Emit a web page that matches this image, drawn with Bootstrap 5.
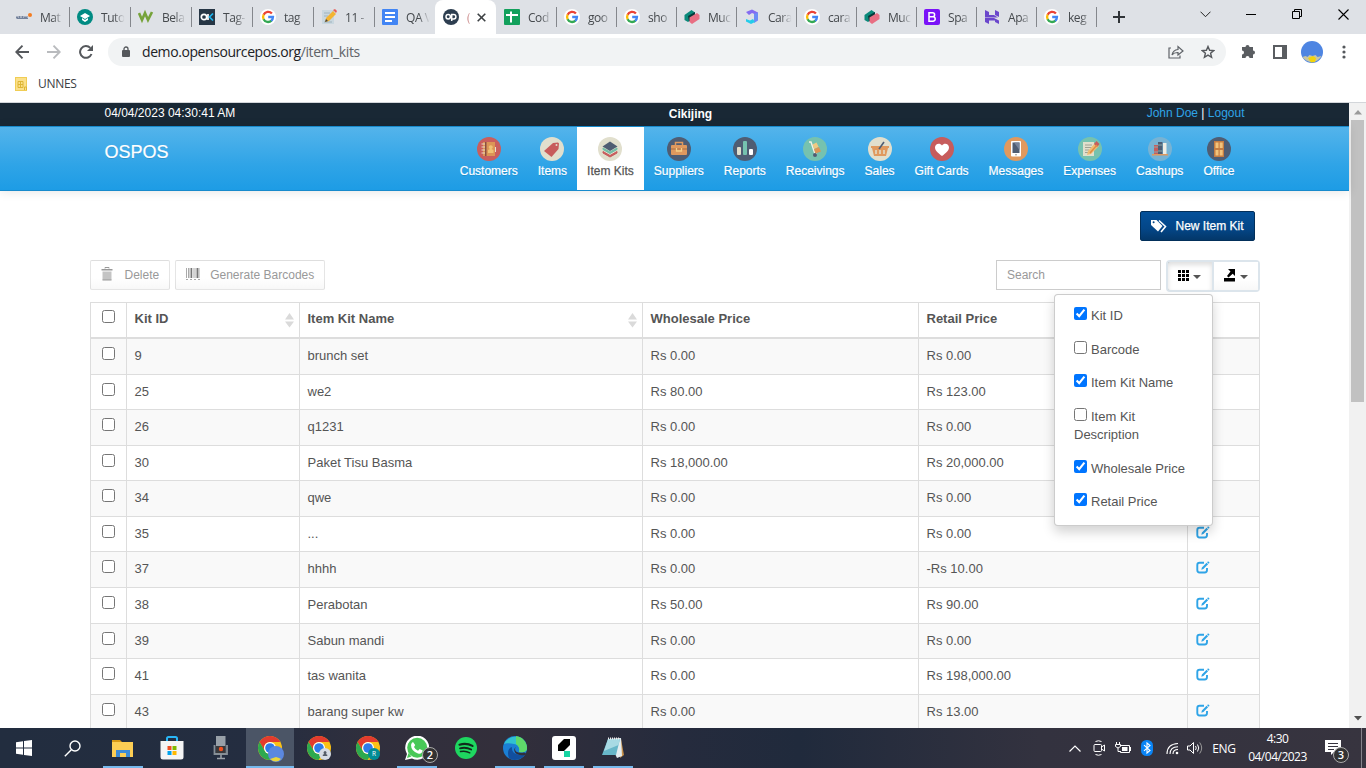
<!DOCTYPE html>
<html lang="en">
<head>
<meta charset="utf-8">
<meta name="viewport" content="width=device-width, initial-scale=1">
<title>Item Kits | OSPOS</title>
<link href="https://cdn.jsdelivr.net/npm/bootstrap@5.3.0/dist/css/bootstrap.min.css" rel="stylesheet">
<style>
:root{--ui:"Open Sans","Noto Sans",sans-serif;--app:"Liberation Sans",Arial,sans-serif}
body{height:768px;font-family:var(--app);font-size:13px;line-height:1.428571;color:#555;overflow:hidden}
svg{display:block;flex:none}
/* browser frame */
.tabs{height:34px;background:#dee1e6;padding-left:8px;font:12px var(--ui);color:#45494d}
.btab{width:61px;padding-left:8px;gap:8px;position:relative;height:34px}
.btab.short{width:60px}
.btab.sep::before{content:"";position:absolute;left:0;top:7px;width:1px;height:20px;background:#84878c}
.btab span{width:25px;flex:none;white-space:nowrap;letter-spacing:-.45px;-webkit-mask-image:linear-gradient(90deg,#000 50%,transparent 95%)}
.btab.current{background:#fff;border-radius:8px 8px 0 0}
.btab.current span{width:7px;color:#b66;-webkit-mask-image:linear-gradient(90deg,#000,transparent 60%)}
.winbtn{width:46px;height:28px}
.toolbar{height:35px}
.cell{width:32px;flex:none;display:flex;align-items:center;justify-content:center}
.omni{width:1118px;height:28px;border-radius:14px;background:#f1f3f4;font:14px var(--ui);letter-spacing:-.42px;color:#5f6368;padding-right:2px}
.omni b{font-weight:400;color:#202124}
.marks{height:34px;border-bottom:1px solid #d3d6da;font:12px var(--ui);color:#3c4043;padding:0 0 4px 15px;gap:10px}
/* application */
.viewport{height:625px;overflow:hidden}
.page{width:1349px}
.inner{width:1170px;margin-left:90px}
.topline{height:23px;background:#192835;color:#fff;font-size:12px;line-height:20px}
.topline .inner,.appnav .inner{padding:0 15.5px 0 14.5px}
.topline a{color:#2fa4e7;text-decoration:none}
.appnav{height:65px;padding:0;border:1px solid #178acc;border-width:1px 0;background:linear-gradient(#54b4eb,#2fa4e7 60%,#1d9ce5);box-shadow:0 1px 10px rgba(0,0,0,.1);text-shadow:0 1px 0 rgba(0,0,0,.12)}
.brandname{font-size:18px;color:#fff;padding-top:13px;-webkit-text-stroke:.2px}
.mod{padding:10px 10px 0;height:63px;font-size:12px;color:#fff;display:flex;flex-direction:column;align-items:center;line-height:17px;gap:1.5px;text-decoration:none;white-space:nowrap;-webkit-text-stroke:.2px}
.mod.on{background:#fff;color:#555}
.abtn{height:30px;border:1px solid rgba(0,0,0,.1);border-radius:2px;font-size:12px;line-height:18px;padding:5px 10px;display:flex;align-items:center;color:#999;background:linear-gradient(#fff,#fff 60%,#f8f8f8)}
.abtn.main{color:#fff;background:linear-gradient(#04519b,#044687 60%,#033769);border-color:#022f5a;-webkit-text-stroke:.25px #fff}
.find{width:165px;height:30px;border:1px solid #ccc;border-radius:0;font-size:12px;padding:5px 10px;box-shadow:none}
.find::placeholder{color:#999}
.duo{height:32px;width:94px;border:2px solid #dce5ec;border-radius:4px;background:#fff}
.duo>div{width:45px;display:flex;align-items:center;justify-content:center;gap:4px;padding:0 2px 1px 0}
.duo>div:first-child{width:44px;box-shadow:inset 0 3px 5px rgba(0,0,0,.13)}
.duo>div+div{width:46px;padding-right:0;border-left:2px solid #dce5ec;background:linear-gradient(#fff,#fff 60%,#f8f8f8)}
.caret{border:4px solid transparent;border-top-color:#555;border-bottom:0;margin-top:2px}
.kits{width:1170px;table-layout:fixed;border-collapse:collapse;margin:0;color:#555;font-size:13px}
.kits>:not(caption)>*>*{padding:8px 7.5px;border:1px solid #ddd;box-shadow:none;background:#fff;line-height:18.57px;white-space:nowrap;overflow:visible}
.kits>tbody>tr:nth-child(odd)>td{background:#f9f9f9}
.kits>thead>tr>th{border-bottom-width:2px;padding-top:7px;font-weight:700;position:relative}
.kits input,.colmenu input{width:13px;height:13px;margin:0}
.kits td:first-child input,.kits th:first-child input{display:block;margin:0 auto 3px 3.5px}
.kits th:first-child input{margin-bottom:6px}
.kits td svg{margin-top:1px}
.sorter{position:absolute;right:5px;top:10px}
.colmenu{position:absolute;left:1053.5px;top:191px;width:159px;height:232px;background:#fff;border:1px solid rgba(0,0,0,.2);border-radius:4px;box-shadow:0 6px 12px rgba(0,0,0,.175);padding:12px 19.5px 0;z-index:5}
.colmenu label{display:block;margin-bottom:15px;line-height:18.57px}
.colmenu input{vertical-align:-1px;margin-right:4px;position:relative;top:-1px}
.scroller{width:17px;background:#f1f1f1;padding:7px 0;display:flex;flex-direction:column;align-items:center}
.thumb{width:13px;height:282px;background:#c1c1c1;margin-top:5px}
/* taskbar */
.taskbar{height:40px;background:linear-gradient(90deg,#222d3f 0,#242d40 260px,#302f3d 370px,#332f3b 500px,#252b3d 680px,#202a3c 800px,#33323f 1040px,#37343f);color:#fff;font:12px var(--ui);letter-spacing:-.5px}
.app{width:48px;height:40px;margin-right:1px;display:flex;align-items:center;justify-content:center;position:relative;flex:none}
.open::after{content:"";position:absolute;bottom:0;left:4px;width:40px;height:2px;background:#76b9ed}
.app.front{background:#4b5566}.app.front::after{left:0;width:48px}
.cnt{position:absolute;width:16px;height:16px;border-radius:50%;background:#333;border:1px solid #aaa;font:600 11px/14px var(--ui);text-align:center;letter-spacing:0}
.clock{width:78px;text-align:center;line-height:18px}
</style>
</head>
<body class="d-flex flex-column bg-white">
<svg width="0" height="0" class="position-absolute">
<defs>
<symbol id="goog" viewBox="0 0 16 16"><circle cx="8" cy="8" r="8" fill="#fff"/><g fill="none" stroke-width="2.3"><path d="M11.9 4.5A5 5 0 0 0 3.6 5.8" stroke="#ea4335"/><path d="M3.7 5.6a5 5 0 0 0 0 4.8" stroke="#fbbc05"/><path d="M3.6 10.2A5 5 0 0 0 11.5 11.6" stroke="#34a853"/><path d="M8.2 8H13A5 5 0 0 1 11.2 11.8" stroke="#4285f4"/></g></symbol>
<symbol id="hex" viewBox="0 0 16 16"><path d="M.5 6l7-5L11 3.500V8l-7 5-3.500-2z" fill="#0b8a7b"/><path d="M4 7l7-4v5l-6 4.500z" fill="#073b3a"/><path d="M5.500 8.500L13 4l2.500 2v4L8 15l-2.500-2z" fill="#e86f83"/></symbol>
<symbol id="chrome" viewBox="0 0 24 24"><circle cx="12" cy="12" r="12" fill="#fbc116"/><path d="M1.6 6A12 12 0 0 1 22.4 6H12a6 6 0 0 0-5.6 8.2z" fill="#e33b2e"/><path d="M1.6 6A12 12 0 0 0 11.5 24L17 15.3A6 6 0 0 1 6.6 14.6z" fill="#2da94f"/><circle cx="12" cy="12" r="6" fill="#fff"/><circle cx="12" cy="12" r="4.8" fill="#2f7bea"/></symbol>
<symbol id="edit" viewBox="0 0 14 13"><path d="M8 1.800H3.600Q1.300 1.800 1.300 4v5Q1.300 11.500 3.600 11.500H8.600Q11 11.500 11 9V7" fill="none" stroke="#2fa4e7" stroke-width="1.900"/><path d="M5.300 8.800l.6-2.300L10.600 1.800l1.500 1.500-4.700 4.800zM11.100 1.200l1-.9 1.500 1.400-1 1z" fill="#2fa4e7"/></symbol>
</defs></svg>

<div class="tabs d-flex align-items-center">
 <div class="btab d-flex align-items-center"><svg width="16" height="16"><path d="M0 8h2v1H0zm3-1h1v2h2V7h1v2h1V8h3v1h1v1H1V9h2z" fill="#73829c"/><path d="M0 7h12v3H0z" fill="#73829c" opacity=".5"/><circle cx="14" cy="6" r="2" fill="#f47b20"/></svg><span>Mat</span></div>
 <div class="btab sep d-flex align-items-center"><svg width="16" height="16"><circle cx="8" cy="8" r="8" fill="#008b83"/><path d="M3 7l5-3 5 3-5 3zM5 9v2l3 2 3-2V9l-3 2z" fill="#fff"/></svg><span>Tuto</span></div>
 <div class="btab sep d-flex align-items-center"><svg width="16" height="16" fill="none" stroke="#76a33a" stroke-width="2.600"><path d="M1 4l3 7 3-7 3 7 4-8"/></svg><span>Bela</span></div>
 <div class="btab sep d-flex align-items-center"><svg width="16" height="16"><path fill="#263645" d="M0 0h16v16H0z"/><g fill="none" stroke-width="1.700"><circle cx="5" cy="8" r="2.700" stroke="#fff"/><path d="M9 5v6" stroke="#fff"/><path d="M14 4.500L10.500 8l3.500 3.500" stroke="#1cb5ef"/></g></svg><span>Tag-</span></div>
 <div class="btab sep d-flex align-items-center"><svg width="16" height="16"><use href="#goog"/></svg><span>tag</span></div>
 <div class="btab sep d-flex align-items-center"><svg width="16" height="16"><path fill="#c9d7df" d="M1 1h12v14H1z"/><path d="M3 4h6M3 7h4M3 13h8" stroke="#9fb2bd"/><path d="M4 13l1-4 7-7 3 3-7 7z" fill="#f3b431"/><path d="M12 1l2-1 2 2-1 2z" fill="#e75d58"/><path d="M4 13l1-3 2 2z" fill="#444"/></svg><span>11 -</span></div>
 <div class="btab sep d-flex align-items-center"><svg width="16" height="16"><rect width="16" height="16" rx="1" fill="#4285f4"/><path d="M3 4h10M3 8h10M3 12h7" stroke="#fff" stroke-width="2"/></svg><span>QA V</span></div>
 <div class="btab current d-flex align-items-center"><svg width="16" height="16"><circle cx="8" cy="8" r="8" fill="#2d3e50"/><g fill="none" stroke="#fff" stroke-width="1.500"><circle cx="5.200" cy="7.700" r="2.200"/><path d="M8.700 12V5.500h2a2.200 2.200 0 0 1 0 4.400H8"/></g></svg><span>(</span><svg width="9" height="9" stroke="#3c4043" stroke-width="1.600" style="margin-left:-5px"><path d="M.7.7l7.600 7.600M8.300.7L.7 8.300"/></svg></div>
 <div class="btab short d-flex align-items-center"><svg width="16" height="16"><rect width="16" height="16" rx="1" fill="#12a05c"/><path d="M2 6h12M7 2.500v11" stroke="#fff" stroke-width="2"/></svg><span>Cod</span></div>
 <div class="btab short sep d-flex align-items-center"><svg width="16" height="16"><use href="#goog"/></svg><span>goo</span></div>
 <div class="btab short sep d-flex align-items-center"><svg width="16" height="16"><use href="#goog"/></svg><span>sho</span></div>
 <div class="btab short sep d-flex align-items-center"><svg width="16" height="16"><use href="#hex"/></svg><span>Muc</span></div>
 <div class="btab short sep d-flex align-items-center"><svg width="16" height="16"><path d="M2 3l6-2.500 6 3v3L8 4 5 6z" fill="#846cf1"/><path d="M10 5l4-1.500v8l-4 2.500z" fill="#6d8df5"/><path d="M2 10l4 1.500 3-1.500 2 3-4 2-5-2.500z" fill="#25ccea"/></svg><span>Cara</span></div>
 <div class="btab short sep d-flex align-items-center"><svg width="16" height="16"><use href="#goog"/></svg><span>cara</span></div>
 <div class="btab short sep d-flex align-items-center"><svg width="16" height="16"><use href="#hex"/></svg><span>Muc</span></div>
 <div class="btab short sep d-flex align-items-center"><svg width="16" height="16"><rect width="16" height="16" rx="2" fill="#7a12f8"/><path d="M5 3.800h3.600a2 2 0 0 1 0 4H5zM5 7.800h4a2.200 2.200 0 0 1 0 4.400H5z" fill="none" stroke="#fff" stroke-width="1.500"/></svg><span>Spa</span></div>
 <div class="btab short sep d-flex align-items-center"><svg width="16" height="16" fill="#6b47cc"><path d="M1 1l4 2v3h5l4 2.500H1zM11 1l4 2v5l-4-2zM1 9h9l5 2.500V15l-4-2v-1.500H5V15l-4-2z"/></svg><span>Apa</span></div>
 <div class="btab short sep d-flex align-items-center"><svg width="16" height="16"><use href="#goog"/></svg><span>keg</span></div>
 <div class="btab sep d-flex align-items-center" style="width:86px;padding-left:17px"><svg width="12" height="12" stroke="#303438" stroke-width="2"><path d="M0 6h12M6 0v12"/></svg></div>
 <div class="d-flex align-self-start">
  <div class="winbtn d-flex align-items-center justify-content-center"><svg width="11" height="7" fill="none" stroke="#222"><path d="M.5.700l5 5 5-5"/></svg></div>
  <div class="winbtn d-flex align-items-center justify-content-center"><svg width="10" height="1"><path fill="#000" d="M0 0h10v1H0z"/></svg></div>
  <div class="winbtn d-flex align-items-center justify-content-center"><svg width="10" height="10" fill="none" stroke="#000"><path d="M.5 2.500h7v7h-7zM2.500 2V.5h7v7H8"/></svg></div>
  <div class="winbtn d-flex align-items-center justify-content-center"><svg width="11" height="11" stroke="#000" stroke-width="1.100"><path d="M.5.5l10 10M10.500.5l-10 10"/></svg></div>
 </div>
</div>
<div class="toolbar d-flex align-items-center" style="padding-left:6px">
 <div class="cell"><svg width="14" height="14" fill="none" stroke="#55585c" stroke-width="1.900"><path d="M14 7H1.500M7.500.7L1.300 7l6.200 6.300"/></svg></div>
 <div class="cell"><svg width="14" height="14" fill="none" stroke="#b9bbbe" stroke-width="1.900"><path d="M0 7h12.500M6.500.7L12.700 7l-6.200 6.300"/></svg></div>
 <div class="cell"><svg width="14" height="14" fill="none" stroke="#55585c" stroke-width="2"><path d="M12.500 9A5.900 5.900 0 1 1 11.300 2.900"/><path d="M14 0v6H8z" fill="#55585c" stroke="none"/></svg></div>
 <div class="omni d-flex align-items-center" style="margin:0 6px">
  <svg width="8" height="11" style="margin:0 12px 0 14px"><path d="M2 5V3a2 2 0 0 1 4 0v2" fill="none" stroke="#55585c" stroke-width="1.300"/><rect y="4" width="8" height="7" rx="1" fill="#55585c"/></svg>
  <div class="flex-grow-1"><b>demo.opensourcepos.org</b>/item_kits</div>
  <div class="cell"><svg width="16" height="14" fill="none" stroke="#5f6368" stroke-width="1.200"><path d="M3 3H1v10h11v-2.500"/><path d="M4 10q1-5 6-5.500V1.500L15 6l-5 4V7.500Q6 7.300 4 10z"/></svg></div>
  <div class="cell"><svg width="14" height="14" viewBox="0 0 14 14" fill="none" stroke="#55585c" stroke-width="1.400"><path d="M7 1.500l1.600 3.800 4.100.3-3.100 2.700 1 4L7 10.100 3.400 12.300l1-4L1.300 5.600l4.100-.3z"/></svg></div>
 </div>
 <div class="cell"><svg width="15" height="15" fill="#5a5d61"><path d="M1 3h3.500a2 2 0 0 1 4 0H12v3.500a2 2 0 0 1 0 4V14H8.500a2 2 0 0 0-4 0H1v-3.500a2 2 0 0 0 0-4z"/></svg></div>
 <div class="cell"><svg width="14" height="14"><path fill="#5a5d61" d="M0 0h14v14H0z"/><path fill="#fff" d="M2 2h7v10H2z"/></svg></div>
 <div class="cell"><svg width="22" height="22"><circle cx="11" cy="11" r="11" fill="#4e85e2"/><path d="M1.500 16l3-1 2 1 2-2 3 1 3-1 2 2 4-1A11 11 0 0 1 1.500 16z" fill="#c9c6a3"/><path d="M7 17l5-2 3 2-1 4-4 .5z" fill="#f2d40b"/></svg></div>
 <div class="cell"><svg width="4" height="14" fill="#55585c"><circle cx="2" cy="2" r="1.600"/><circle cx="2" cy="7" r="1.600"/><circle cx="2" cy="12" r="1.600"/></svg></div>
</div>
<div class="marks d-flex align-items-center"><svg width="13" height="14" style="margin-top:1px"><rect x=".5" y=".5" width="11" height="13" fill="#fbe08a" stroke="#f0cd55"/><path d="M3 4.500h5v6H3zM3 7.500h5M5.500 5v5M9.500 13v-3h2v3" fill="none" stroke="#deb635"/></svg><span style="letter-spacing:-.3px">UNNES</span></div>

<div class="viewport d-flex position-relative">
 <main class="page">
  <div class="topline"><div class="inner d-flex justify-content-between position-relative"><span>04/04/2023 04:30:41 AM</span><b class="position-absolute start-50 translate-middle-x" style="margin-left:15.5px;padding-top:1px">Cikijing</b><span><a href="#">John Doe</a> | <a href="#">Logout</a></span></div></div>
  <nav class="appnav navbar navbar-expand d-block"><div class="inner d-flex justify-content-between">
   <div class="brandname">OSPOS</div>
   <div class="d-flex">
    <a class="mod"><svg width="24" height="24"><circle cx="12" cy="12" r="12" fill="#c95e5d"/><path fill="#dc9556" d="M6 5h12v14H6z"/><path fill="#8a4f42" d="M8 5h1.500v14H8z"/><path d="M4.500 7H8M4.500 10H8M4.500 13H8M4.500 16H8" stroke="#eadbc6"/><path fill="#efc274" d="M11 16v-3l2-1a2 2 0 1 1 1.500 0l2 1v3z"/><path fill="#e6e0cf" d="M18 10h1v5h-1z"/></svg>Customers</a>
    <a class="mod"><svg width="24" height="24"><circle cx="12" cy="12" r="12" fill="#e1dfcd"/><path d="M13 6l5-.5 1 1-.5 5.500-7 8-7.500-6z" fill="#c75c5c"/><circle cx="16.500" cy="8" r="1" fill="#e1dfcd"/></svg>Items</a>
    <a class="mod on"><svg width="24" height="24"><circle cx="12" cy="12" r="12" fill="#e1dfcd"/><path d="M5 14.500l7 4 7-4v1.500l-7 4-7-4z" fill="#c75c5c" stroke="#c75c5c"/><path d="M5 11l7 4 7-4v1.500l-7 4-7-4z" fill="#72bda6" stroke="#72bda6"/><path d="M4.500 9.500L12 4.500l7.500 5L12 14z" fill="#4f5d73"/></svg>Item Kits</a>
    <a class="mod"><svg width="24" height="24"><circle cx="12" cy="12" r="12" fill="#4f5d73"/><path d="M8.500 8V5.500h7V8" fill="none" stroke="#e0995e" stroke-width="1.500"/><rect x="4" y="8" width="16" height="10" rx="1" fill="#e0995e"/><path d="M4 12h16" stroke="#a76c42"/><path d="M9.500 11v3h5v-3" fill="none" stroke="#f5cf87" stroke-width="1.300"/></svg>Suppliers</a>
    <a class="mod"><svg width="24" height="24"><circle cx="12" cy="12" r="12" fill="#4f5d73"/><rect x="4" y="10" width="4" height="8" rx="1" fill="#e1dfcd"/><rect x="10" y="4" width="4" height="14" rx="1" fill="#76c2af"/><rect x="16" y="12" width="4" height="6" rx="1" fill="#fff"/></svg>Reports</a>
    <a class="mod"><svg width="24" height="24"><circle cx="12" cy="12" r="12" fill="#76c2af"/><path d="M6 5h2l4 12h2" stroke="#f4f1e5" stroke-width="1.400" fill="none"/><path d="M9.500 7.500l4-2 2.200 4.500-4.500 2z" fill="#f1c982"/><path d="M11 12.200l5-2.200 2 4.500-5.500 2z" fill="#dc9556"/><circle cx="12" cy="18" r="2" fill="#4f5d73"/></svg>Receivings</a>
    <a class="mod"><svg width="24" height="24"><circle cx="12" cy="12" r="12" fill="#e1dfcd"/><path d="M3 9h18v2h-1l-2 8H6L4 11H3z" fill="#e0995e"/><path d="M8 13v4M12 13v4M16 13v4" stroke="#e1dfcd" stroke-width="1.500"/><path d="M11 12l5-7" stroke="#4f5d73" stroke-width="1.600"/></svg>Sales</a>
    <a class="mod"><svg width="24" height="24"><circle cx="12" cy="12" r="12" fill="#c75c5c"/><path d="M12 19C8 16 5 13.500 5 10.500c0-4 5-5 7-2 2-3 7-2 7 2C19 13.500 16 16 12 19z" fill="#fff"/></svg>Gift Cards</a>
    <a class="mod"><svg width="24" height="24"><circle cx="12" cy="12" r="12" fill="#e0995e"/><rect x="7" y="4" width="10" height="15.500" rx="1" fill="#fff"/><path fill="#4f5d73" d="M8.500 5.500h7v10.500h-7z"/><path d="M15.500 5.500V13L10 5.500z" fill="#77839a"/><circle cx="12" cy="17.800" r=".8" fill="#888"/></svg>Messages</a>
    <a class="mod"><svg width="24" height="24"><circle cx="12" cy="12" r="12" fill="#76c2af"/><path fill="#e1dfcd" d="M5 5h11v14H5z"/><path d="M7 8h7M7 10.500h7M7 13h4M7 15.500h3" stroke="#a0a193"/><path d="M9 18l1-4 7-8 4 3-8 8z" fill="#f0bd72"/><path d="M16 7l2.500-3 3 3L19 10z" fill="#c75c5c"/><path d="M12 16l7-8" stroke="#df8c46" stroke-width="1.500"/></svg>Expenses</a>
    <a class="mod"><svg width="24" height="24"><circle cx="12" cy="12" r="12" fill="#77b3d4"/><path fill="#c75c5c" d="M6 8h4v9H6z"/><path fill="#4f5d73" d="M10 5h4.500v12H10z"/><path fill="#efeee5" d="M15 6h3.500v11H15z"/><path d="M6 10h4M6 15h4M10 8h4.500M10 14h4.500" stroke="#88a9aa"/><path fill="#e0995e" d="M4 17h16v1.500H4z"/></svg>Cashups</a>
    <a class="mod"><svg width="24" height="24"><circle cx="12" cy="12" r="12" fill="#4f5d73"/><path fill="#c67d42" d="M7 4h10v16H7z"/><path d="M8.500 5.500h3v5.500h-3zM12.700 5.500h3v5.500h-3zM8.500 13h3v5.500h-3zM12.700 13h3v5.500h-3z" fill="#f3c37b"/></svg>Office</a>
   </div></div></nav>
  <div class="inner">
   <div class="d-flex justify-content-end" style="padding:20px 5px 19px 0"><div class="abtn main" style="width:115px"><svg width="17" height="14" style="margin-right:7.500px"><path d="M0 1h5.500l6 6-4.500 5.500L0 6z" fill="#fff"/><path d="M8 1.500l6.500 6L10 13" fill="none" stroke="#fff" stroke-width="1.600"/><circle cx="2.600" cy="3.200" r="1" fill="#044687"/></svg>New Item Kit</div></div>
   <div class="d-flex" style="height:42px">
    <div class="abtn"><svg width="12" height="14" style="margin:-2px 11.500px 0 0"><path d="M4 1.500V.5h4v1" stroke="#999" fill="none"/><path fill="#999" d="M.5 2h11v1.500H.5z"/><path fill="#c4c4c4" d="M1.500 4.500h9V13h-9z"/><path d="M1.500 13h9" stroke="#999"/></svg>Delete</div>
    <div class="abtn" style="margin-left:5px"><svg width="14" height="14" style="margin:-2px 10px 0 0"><path d="M.5 1v10M2.500 1v10M4 1v10M8 1v10M10 1v10M13 1v10" stroke="#aaa"/><path d="M5.500 1v10M11.500 1v10" stroke="#777" stroke-width="1.500"/><path d="M0 12.500h14" stroke="#aaa" stroke-dasharray="2 2"/></svg>Generate Barcodes</div>
    <input class="find form-control ms-auto" placeholder="Search"><div class="duo d-flex" style="margin-left:5px"><div><svg width="11" height="11"><path d="M0 0h3v3H0zM4 0h3v3H4zM8 0h3v3H8zM0 4h3v3H0zM4 4h3v3H4zM8 4h3v3H8zM0 8h3v3H0zM4 8h3v3H4zM8 8h3v3H8z"/></svg><i class="caret"></i></div><div><svg width="12" height="13"><path d="M4 0h7v7L8.700 4.800 4.500 8.500 3 7 6.500 2.500zM0 9h11v3.500H0z"/></svg><i class="caret"></i></div></div>
   </div>
   <table class="kits table table-bordered"><colgroup><col style="width:36px"><col style="width:173px"><col style="width:343px"><col style="width:276px"><col style="width:269px"><col></colgroup>
    <thead><tr><th><input type="checkbox"></th><th>Kit ID<svg class="sorter" width="9" height="16" fill="#dadada"><path d="M4.500 0L9 6.500H0zM0 8.500h9l-4.500 6z"/></svg></th><th>Item Kit Name<svg class="sorter" width="9" height="16" fill="#dadada"><path d="M4.500 0L9 6.500H0zM0 8.500h9l-4.500 6z"/></svg></th><th>Wholesale Price</th><th>Retail Price</th><th></th></tr></thead>
    <tbody id="rows"></tbody></table>
  </div>
 </main>
 <div class="scroller"><svg width="8" height="5"><path d="M4 0l4 4.500H0z" fill="#9a9a9a"/></svg><div class="thumb"></div><svg class="mt-auto" width="8" height="5"><path d="M0 0h8L4 4.500z" fill="#505050"/></svg></div>
 <div class="colmenu"><label><input type="checkbox" checked>Kit ID</label><label><input type="checkbox">Barcode</label><label><input type="checkbox" checked>Item Kit Name</label><label><input type="checkbox">Item Kit Description</label><label><input type="checkbox" checked>Wholesale Price</label><label><input type="checkbox" checked>Retail Price</label></div>
</div>

<footer class="taskbar d-flex align-items-center">
 <div class="app m-0"><svg width="16" height="16" fill="#fff"><path d="M0 2.200l7-1v6.300H0zM8 1l8-1v7.500H8zM0 8.500h7v6.300l-7-1zM8 8.500h8V16l-8-1z"/></svg></div>
 <div class="app" style="margin-right:3px"><svg width="17" height="17" fill="none" stroke="#fff" stroke-width="1.400"><circle cx="11" cy="6" r="5"/><path d="M7.300 9.700L.8 16.200"/></svg></div>
 <div class="app open"><svg width="22" height="19"><path d="M0 1h8l2 2H0z" fill="#d99a16"/><path d="M0 3h21v15H0z" fill="#fdce54"/><path d="M4 18v-7h14v7h-4v-4H8v4z" fill="#3d8bd6"/></svg></div>
 <div class="app"><svg width="24" height="24"><path d="M7 6V2.500Q7 1 8.500 1h7Q17 1 17 2.500V6" fill="none" stroke="#29b6f6" stroke-width="2"/><path d="M.5 5h23v16q0 2.500-2.500 2.500H3Q.5 23.500.5 21z" fill="#f5f5f5"/><path fill="#f04e23" d="M7.500 10h4v4h-4z"/><path fill="#7fba00" d="M12.500 10h4v4h-4z"/><path fill="#00a3ee" d="M7.500 15h4v4h-4z"/><path fill="#ffb900" d="M12.500 15h4v4h-4z"/></svg></div>
 <div class="app"><svg width="16" height="24"><rect x="3" width="9.500" height="18" fill="#98a0a8"/><path fill="#39393c" d="M3 10h9.500v7H3z"/><path d="M1.500 9v9h12.500V9" fill="none" stroke="#868e96" stroke-width="1.800"/><circle cx="8" cy="13" r="2.200" fill="#f1501f"/><path d="M8 18.500V23M4 22.500h8" stroke="#9aa1a8" stroke-width="1.500"/></svg></div>
 <div class="app open front"><svg width="24" height="24" viewBox="0 0 24 24" overflow="visible"><use href="#chrome" width="24" height="24"/><circle cx="18" cy="18" r="8" fill="#5b88df"/><path d="M12 23l3-1 3-1 3 1 2 1q-5 5-11 0z" fill="#ead63c"/></svg></div>
 <div class="app"><svg width="24" height="24" viewBox="0 0 24 24" overflow="visible"><use href="#chrome" width="24" height="24"/><circle cx="18" cy="18" r="6" fill="#d6dce4"/><path d="M15.800 20v-1.200l1.500-.8a1.500 1.500 0 1 1 1.500 0l1.500.8V20z" fill="#555d68"/></svg></div>
 <div class="app"><svg width="24" height="24" viewBox="0 0 24 24" overflow="visible"><use href="#chrome" width="24" height="24"/><circle cx="18" cy="18" r="6" fill="#008c95"/><text x="15.900" y="20.400" font-size="6.500" fill="#fff">R</text></svg></div>
 <div class="app open"><svg width="24" height="24"><path d="M0 24l2-6A12 12 0 1 1 7 22.500z" fill="#fff"/><circle cx="12.200" cy="11.800" r="10" fill="#48c857"/><path d="M2 22l1.500-5 3 3.500z" fill="#48c857"/><path d="M8 6l2.200 3-1.200 2q1.500 3 4 3.700l1.700-1.700 3 1.600Q17 18.500 13 17.500 6 15 6 9q.5-2.500 2-3z" fill="#fff"/></svg><span class="cnt" style="left:29px;top:19px">2</span></div>
 <div class="app"><svg width="22" height="22"><circle cx="11" cy="11" r="11" fill="#1ed760"/><g fill="none" stroke="#102b1b" stroke-linecap="round"><path d="M4.500 7.700q7-2 13 1.200" stroke-width="2.200"/><path d="M5 11.300q6-1.500 11.200 1.200" stroke-width="1.800"/><path d="M5.500 14.600q5-1.200 9.300 1.200" stroke-width="1.500"/></g></svg></div>
 <div class="app open"><svg width="24" height="24"><circle cx="12" cy="12" r="12" fill="#1b7fd4"/><path d="M1 8A12 12 0 0 1 24 12c0 4-4 5-8 4 1-4 0-7-5-8C7 7 3 7 1 8z" fill="#31c1d1"/><path d="M13 .1A12 12 0 0 1 24 12c0 4-4 5-8 4 1-3 0-6-3-8z" fill="#5fd96a"/><path d="M9 11c-1 6 5 9 13 7.500A12 12 0 0 1 6 22.300C4 17 5 12 9 11z" fill="#114f9e"/><path d="M13 11q-2 2 0 4.500 3 2 8 1l2 .5-1 2q-7 1-10-2.500-2-3.500 1-5.500z" fill="#302f3b"/></svg></div>
 <div class="app open"><svg width="24" height="24"><rect width="24" height="24" rx="3" fill="#fff"/><path d="M6 9l6-6h6v6l-6 6H6z"/><path fill="#18d5a2" d="M12 15h6v6h-6z"/></svg></div>
 <div class="app open"><svg width="24" height="24"><path d="M20 3l3 16-4 3z" fill="#c8914a"/><path d="M7 3l13-1 1 18-5 2z" fill="#e4edf0"/><path d="M7 3h12l-4 16H1z" fill="#68b7c9"/><path d="M7 3h12l-1.500 6L3 15z" fill="#a8dae4"/><path d="M7 2.500h12" stroke="#eee" stroke-dasharray="1 1" stroke-width="2"/></svg></div>
 <div class="d-flex align-items-center ms-auto" style="width:299px">
  <div style="width:20px;padding-left:2px"><svg width="12" height="7" fill="none" stroke="#fff" stroke-width="1.200"><path d="M.5 6.500L6 1l5.500 5.500"/></svg></div>
  <div class="cell" style="width:24px"><svg width="13" height="16" fill="none" stroke="#fff"><rect x="1" y="4.500" width="7.500" height="7" rx="1"/><path d="M8.500 7l3-2v6l-3-2M2.500 1.500q3-1.500 6 0M2.500 14.500q3 1.500 6 0"/></svg></div>
  <div class="cell" style="width:24px"><svg width="16" height="12" fill="none" stroke="#fff"><path d="M6 3.500h8.500v7h-9V9M1.500 0v2M4.500 0v2M.5 2.500h5v2q-2.500 3-5 0zM3 6v3.500h2M15.500 5v4"/><path fill="#fff" stroke="none" d="M7 5h5.500v4H7z"/></svg></div>
  <div class="cell" style="width:24px"><svg width="12" height="16"><rect width="12" height="16" rx="5.500" fill="#0a84f5"/><path d="M3 5.200l6 5.300L6 13V3l3 2.500-6 5.300" fill="none" stroke="#fff" stroke-width="1.100"/></svg></div>
  <div class="cell" style="width:26px"><svg width="13" height="13" fill="none" stroke="#fff" stroke-width="1.100"><path d="M1 12Q1 2 12 1.500M4 12Q4 5 12 4.700M7 12q0-4.500 5-4.500"/><circle cx="11" cy="11" r="1.300" fill="#fff" stroke="none"/></svg></div>
  <div class="cell" style="width:20px"><svg width="16" height="14" fill="none" stroke="#fff"><path d="M.5 5h2.500l3.500-3.500v11L3 9H.5zM8.500 5q1.500 2 0 4M10.500 3.500q2.500 3.500 0 7"/><path d="M12.700 1.500q4 5.500 0 11" stroke="#999"/></svg></div>
  <div class="text-center" style="width:38px;letter-spacing:-.3px">ENG</div>
  <div class="clock" style="margin-left:-3px;width:75px;flex:none">4:30<br>04/04/2023</div>
  <div class="position-relative" style="margin-left:9px;width:34px;height:40px;flex:none"><svg width="16" height="15" style="margin:12px 0 0 1px"><path d="M0 0h16v12H9l-3 3v-3H0z" fill="#fff"/><path d="M3 3.500h10M3 6.500h10M3 9.500h6" stroke="#37343f"/></svg><span class="cnt" style="left:9px;top:19px">3</span></div>
  <div style="border-left:1px solid #85838b;height:40px;width:5px" class="ms-auto"></div>
 </div>
</footer>
<script>
const kits=[[9,"brunch set","Rs 0.00","Rs 0.00"],[25,"we2","Rs 80.00","Rs 123.00"],[26,"q1231","Rs 0.00","Rs 0.00"],[30,"Paket Tisu Basma","Rs 18,000.00","Rs 20,000.00"],[34,"qwe","Rs 0.00","Rs 0.00"],[35,"...","Rs 0.00","Rs 0.00"],[37,"hhhh","Rs 0.00","-Rs 10.00"],[38,"Perabotan","Rs 50.00","Rs 90.00"],[39,"Sabun mandi","Rs 0.00","Rs 0.00"],[41,"tas wanita","Rs 0.00","Rs 198,000.00"],[43,"barang super kw","Rs 0.00","Rs 13.00"]];
document.getElementById("rows").innerHTML=kits.map(k=>`<tr><td><input type="checkbox"></td>${k.map(c=>`<td>${c}</td>`).join("")}<td><svg width="14" height="13"><use href="#edit"/></svg></td></tr>`).join("");
</script>
<script src="https://cdn.jsdelivr.net/npm/bootstrap@5.3.0/dist/js/bootstrap.bundle.min.js"></script>
</body>
</html>
